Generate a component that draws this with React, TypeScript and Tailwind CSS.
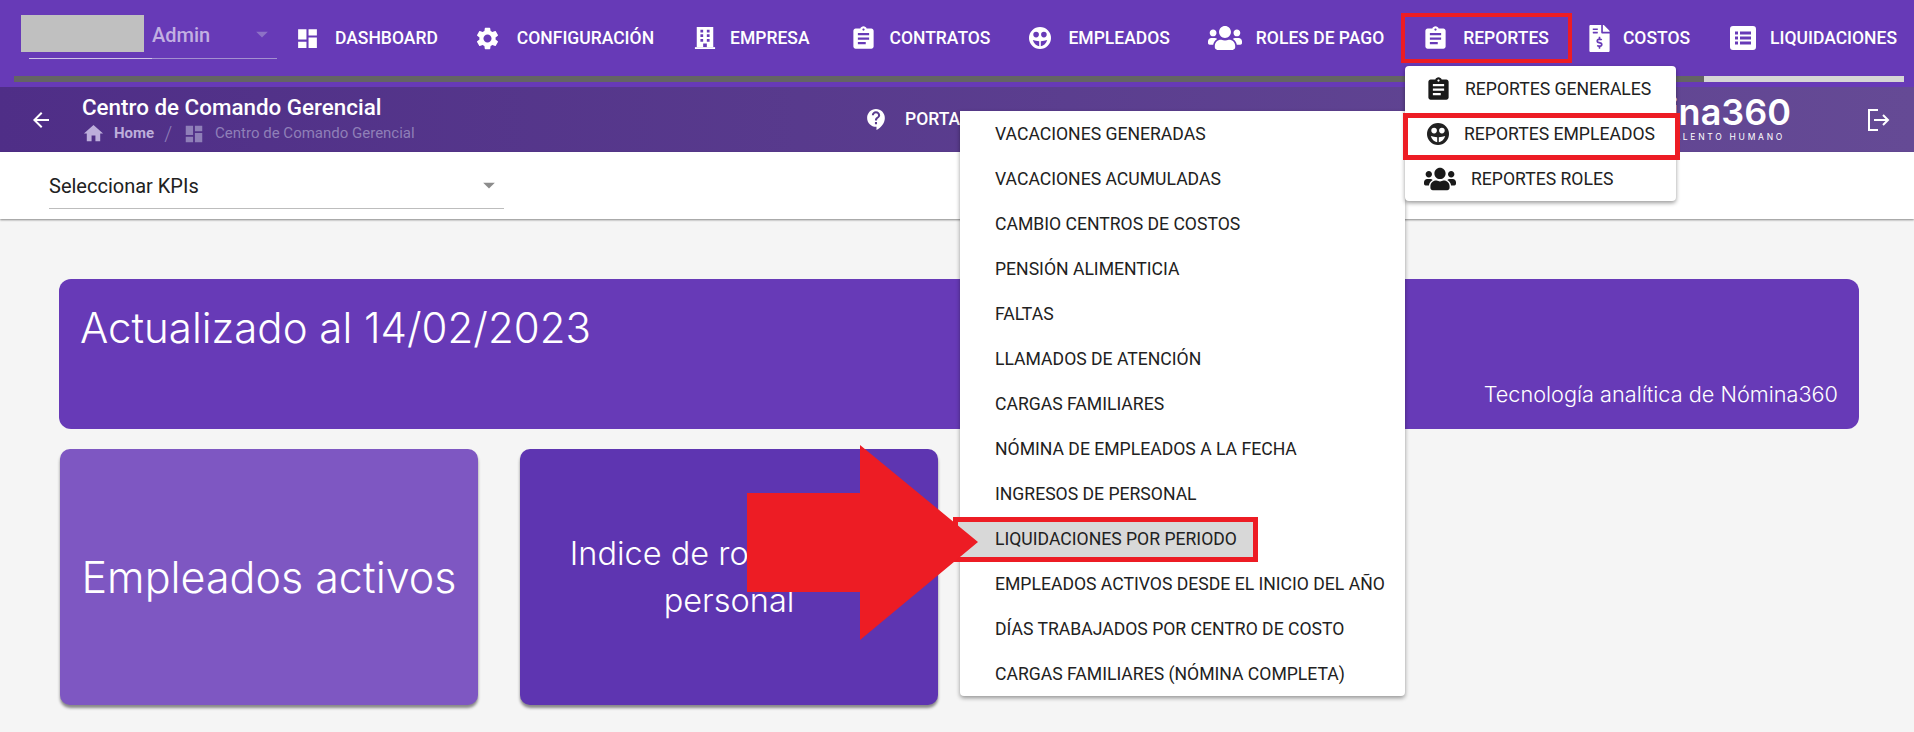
import React from "react";
import { MdDashboard, MdSettings, MdAssignment, MdHome, MdArrowBack, MdContactSupport, MdArrowDropDown } from "react-icons/md";
import { FaUsers, FaFileInvoiceDollar } from "react-icons/fa";

const poppins = "font-['Inter','Noto_Sans',sans-serif]";

function FaceIcon({ size }: { size: number }) {
    return (
        <svg width={size} height={size} viewBox="0 0 24 24" fill="currentColor">
            <path
                fillRule="evenodd"
                d="M12 1a11 11 0 1 0 0 22 11 11 0 0 0 0-22zM8.100 5.800a2.800 2.800 0 1 1 0 5.600 2.800 2.800 0 0 1 0-5.600zm7.800 0a2.800 2.800 0 1 1 0 5.600 2.800 2.800 0 0 1 0-5.600zM4.800 14c1.900.7 4.200 1.100 6.400 1.200v5c-3-.4-5.500-3-6.400-6.200zm14.400 0c-.9 3.200-3.400 5.800-6.400 6.200v-5c2.200-.1 4.500-.5 6.400-1.200z"
            />
        </svg>
    );
}

function BuildingIcon() {
    return (
        <svg width="24" height="26" viewBox="0 0 24 26" fill="currentColor">
            <path
                fillRule="evenodd"
                d="M3 1h18v22H3zM7 4v3h3V4zm7 0v3h3V4zM7 9v3h3V9zm7 0v3h3V9zM7 14v3h3v-3zm7 0v3h3v-3zm-4 5v4h4v-4z"
            />
            <rect x="1" y="23" width="22" height="2" />
        </svg>
    );
}

function ListIcon() {
    return (
        <svg width="26" height="24" viewBox="0 0 26 24" fill="currentColor">
            <path
                fillRule="evenodd"
                d="M3 0h20a3 3 0 0 1 3 3v18a3 3 0 0 1-3 3H3a3 3 0 0 1-3-3V3a3 3 0 0 1 3-3zM5 5.500v3h3v-3zm5 0v3h11v-3zM5 10.500v3h3v-3zm5 0v3h11v-3zM5 15.500v3h3v-3zm5 0v3h11v-3z"
            />
        </svg>
    );
}

function LogoutIcon() {
    return (
        <svg width="24" height="22" viewBox="0 0 24 22" fill="none" stroke="currentColor" strokeWidth="2">
            <path d="M11 1H2v20h9" />
            <path d="M7 11h14M16 6l5 5-5 5" />
        </svg>
    );
}

const navItems = [
    { label: "DASHBOARD", icon: <MdDashboard size={25} />, slot: "w-[25px]", gap: "mr-[15px]", left: "ml-[18px]" },
    { label: "CONFIGURACIÓN", icon: <MdSettings size={27} />, slot: "w-[27px]", gap: "mr-[16px]", left: "ml-[36px]" },
    { label: "EMPRESA", icon: <BuildingIcon />, slot: "w-[22px]", gap: "mr-[14px]", left: "ml-[40px]" },
    { label: "CONTRATOS", icon: <MdAssignment size={27} />, slot: "w-[27px]", gap: "mr-[13px]", left: "ml-[40px]" },
    { label: "EMPLEADOS", icon: <FaceIcon size={24} />, slot: "w-[24px]", gap: "mr-[16px]", left: "ml-[38px]" },
    { label: "ROLES DE PAGO", icon: <FaUsers size={34} />, slot: "w-[34px]", gap: "mr-[14px]", left: "ml-[38px]" },
    { label: "REPORTES", icon: <MdAssignment size={27} />, slot: "w-[27px]", gap: "mr-[14px]", left: "ml-[38px]" },
    { label: "COSTOS", icon: <FaFileInvoiceDollar size={27} />, slot: "w-[27px]", gap: "mr-[10px]", left: "ml-[37px]" },
    { label: "LIQUIDACIONES", icon: <ListIcon />, slot: "w-[26px]", gap: "mr-[14px]", left: "ml-[40px]" },
];

const employeeReports = [
    "VACACIONES GENERADAS",
    "VACACIONES ACUMULADAS",
    "CAMBIO CENTROS DE COSTOS",
    "PENSIÓN ALIMENTICIA",
    "FALTAS",
    "LLAMADOS DE ATENCIÓN",
    "CARGAS FAMILIARES",
    "NÓMINA DE EMPLEADOS A LA FECHA",
    "INGRESOS DE PERSONAL",
    "LIQUIDACIONES POR PERIODO",
    "EMPLEADOS ACTIVOS DESDE EL INICIO DEL AÑO",
    "DÍAS TRABAJADOS POR CENTRO DE COSTO",
    "CARGAS FAMILIARES (NÓMINA COMPLETA)",
];

function NavItem({ label, icon, slot, gap, left }: { label: string; icon: React.ReactNode; slot: string; gap: string; left: string }) {
    return (
        <div className={`flex h-[26px] items-center ${left}`}>
            <span className={`flex justify-center ${slot} ${gap}`}>{icon}</span>
            <span>{label}</span>
        </div>
    );
}

export default function App() {
    return (
        <div className="relative h-[732px] w-[1914px] overflow-hidden bg-[#f5f5f5] font-['Roboto',sans-serif]">
            {/* Top nav */}
            <div className="h-[87px] bg-[#673ab7] pl-[14px] pr-[10px]">
                <div className="flex h-[76px] items-start text-[17.5px] font-medium whitespace-nowrap text-white">
                    <div className="relative ml-[7px] h-[59px] w-[256px] shrink-0 pt-[15px]">
                        <div className="flex items-center">
                            <div className="h-[37px] w-[123px] bg-[#c0c0c0]"></div>
                            <span className="ml-[8px] mt-[2px] text-[20px] text-[#c2b0e2]">Admin</span>
                            <MdArrowDropDown size={28} className="ml-[38px] text-[#8d71c6]" />
                        </div>
                        <div className="absolute bottom-0 left-[8px] flex h-px w-[248px] bg-[#a48fd0]">
                            <div className="w-[123px] bg-[#cfc4e6]"></div>
                        </div>
                    </div>
                    <div className="flex h-[76px] items-start pt-[25px] leading-[26px]">
                        {navItems.map((item) => (
                            <NavItem key={item.label} {...item} />
                        ))}
                    </div>
                </div>
                <div className="flex h-[6px]">
                    <div className="w-[1690px] bg-[#646464]"></div>
                    <div className="flex-1 bg-[#d6d6d6]"></div>
                </div>
            </div>

            {/* Sub header */}
            <div className="flex h-[65px] items-center bg-gradient-to-r from-[#4f2e87] to-[#654a95] whitespace-nowrap text-white">
                <MdArrowBack size={24} className="ml-[29px] shrink-0" />
                <div className="ml-[29px] w-[400px] shrink-0">
                    <div className="text-[22.4px] leading-[22px] font-medium">Centro de Comando Gerencial</div>
                    <div className="mt-[6px] flex h-[20px] items-center text-[15px]">
                        <MdHome size={23} className="text-[#bdaedb]" />
                        <span className="ml-[9px] font-bold text-[#bdaedb]">Home</span>
                        <span className="ml-[10px] text-[20px] font-light text-[#8f7fb8]">/</span>
                        <MdDashboard size={22} className="ml-[11px] text-[#8f7fb8]" />
                        <span className="ml-[10px] text-[#8f7fb8]">Centro de Comando Gerencial</span>
                    </div>
                </div>
                <div className="ml-[382px] flex items-center">
                    <MdContactSupport size={25} />
                    <span className="ml-[16px] text-[17.5px] font-medium">PORTAL DE AYUDA</span>
                </div>
                <div className="ml-auto mr-[23px] flex items-center">
                    <div className="mb-[3px] mr-[76px] flex flex-col items-end">
                        <span className={`text-[36px] leading-[34px] font-semibold ${poppins}`}>Nómina360</span>
                        <span className={`mt-[3px] pr-[6px] text-[8.5px] leading-[10px] tracking-[0.32em] ${poppins}`}>TALENTO HUMANO</span>
                    </div>
                    <LogoutIcon />
                </div>
            </div>

            {/* KPI select */}
            <div className="h-[67px] bg-white px-[49px] pt-[15px] shadow-[0_1px_2px_rgba(0,0,0,0.45)]">
                <div className="relative flex h-[42px] w-[455px] items-center border-b border-[#bdbdbd] pb-[4px] text-[20px] text-[#212121]">
                    Seleccionar KPIs
                    <MdArrowDropDown size={28} className="absolute right-[1px] top-[4px] text-[#8c8c8c]" />
                </div>
            </div>

            {/* Content */}
            <div className={`px-[59px] pt-[60px] text-white ${poppins}`}>
                <div className="flex h-[150px] w-[1800px] flex-col justify-between rounded-[12px] bg-[#673ab7] pb-[22px] pl-[21px] pr-[21px] pt-[25px]">
                    <div className="text-[42px] leading-[48px] font-light">Actualizado al 14/02/2023</div>
                    <div className="text-right text-[21.7px] leading-[26px] font-light">Tecnología analítica de Nómina360</div>
                </div>
                <div className="mt-[20px] flex gap-[42px] pl-[1px]">
                    <div className="flex h-[256px] w-[418px] items-center justify-center rounded-[10px] bg-[#7e57c2] text-[43px] font-light whitespace-nowrap shadow-[0_3px_3px_rgba(0,0,0,0.45)]">
                        Empleados activos
                    </div>
                    <div className="flex h-[256px] w-[418px] items-center justify-center rounded-[10px] bg-[#5e35b1] px-[40px] text-center text-[32.5px] leading-[47px] font-light shadow-[0_3px_3px_rgba(0,0,0,0.45)]">
                        Indice de rotación de personal
                    </div>
                </div>
            </div>

            {/* Employee reports menu */}
            <div className="absolute left-[960px] top-[111px] w-[445px] rounded-b-[4px] bg-white text-[17.6px] font-[450] text-[#212121] shadow-[0_2px_4px_rgba(0,0,0,0.4)]">
                {employeeReports.map((label) => (
                    <div key={label} className="relative flex h-[45px] items-center pl-[35px] pt-[1px]">
                        {label === "LIQUIDACIONES POR PERIODO" && (
                            <div className="absolute -left-[7px] top-[1px] h-[45px] w-[305px] border-[5px] border-[#ed1c24] bg-[#d8d8d8]"></div>
                        )}
                        <span className="relative">{label}</span>
                    </div>
                ))}
            </div>

            {/* Reportes menu */}
            <div className="absolute left-[1405px] top-[66px] w-[271px] rounded-[4px] bg-white text-[17.6px] font-[450] text-[#212121] shadow-[0_2px_4px_rgba(0,0,0,0.4)]">
                <div className="flex h-[45px] items-center pl-[20px] pt-[1px]">
                    <MdAssignment size={27} className="text-[#1a1a1a]" />
                    <span className="ml-[13px]">REPORTES GENERALES</span>
                </div>
                <div className="flex h-[45px] items-center pl-[21px] pt-[1px]">
                    <FaceIcon size={24} />
                    <span className="ml-[14px]">REPORTES EMPLEADOS</span>
                </div>
                <div className="flex h-[45px] items-center pl-[19px] pt-[1px]">
                    <FaUsers size={32} className="text-[#1a1a1a]" />
                    <span className="ml-[15px]">REPORTES ROLES</span>
                </div>
            </div>

            {/* Annotations */}
            <div className="absolute left-[1401px] top-[13px] h-[50px] w-[171px] border-[4px] border-[#ed1c24]"></div>
            <div className="absolute left-[1403px] top-[113px] h-[47px] w-[277px] border-[5px] border-[#ed1c24]"></div>
            <svg className="absolute left-[740px] top-[440px]" width="245" height="205" viewBox="740 440 245 205">
                <polygon points="747,493 860,493 860,445 978,542 860,640 860,592 747,592" fill="#ed1c24" />
            </svg>
        </div>
    );
}
